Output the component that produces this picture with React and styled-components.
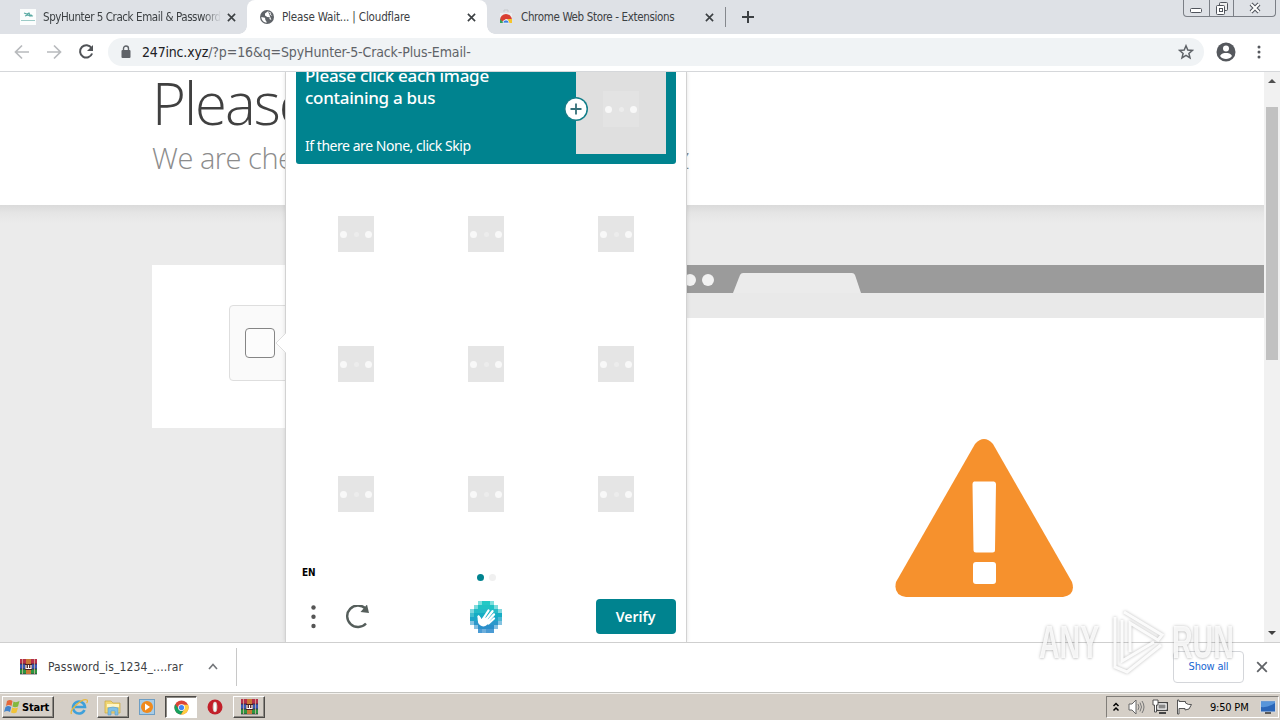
import React from 'react';
import styled, { createGlobalStyle } from 'styled-components';

const ui = `"DejaVu Sans Condensed", "DejaVu Sans", "Noto Sans", sans-serif`;
const light = `"Open Sans", "Noto Sans", sans-serif`;

const GlobalStyle = createGlobalStyle`
  * { box-sizing: border-box; }
  body { margin: 0; font-family: ${ui}; font-stretch: condensed; overflow: hidden; }
  h1, h2, p { margin: 0; font-weight: 400; }
  button { font-family: inherit; font-stretch: inherit; padding: 0; margin: 0; border: 0; background: none; }
  svg { display: block; flex: none; }
`;

const Screen = styled.div`
  position: relative;
  width: 1280px;
  height: 720px;
  display: flex;
  flex-direction: column;
  overflow: hidden;
  background: #fff;
`;

/* ---------- tab strip ---------- */
const TabStrip = styled.header`
  height: 34px;
  flex: none;
  display: flex;
  background: #dee1e6;
  padding-left: 7px;
`;
const Tab = styled.div`
  position: relative;
  width: ${p => p.$w}px;
  height: 34px;
  display: flex;
  align-items: center;
  padding: 0 11px 0 ${p => p.$pad}px;
  background: ${p => (p.$active ? '#fff' : 'transparent')};
  border-radius: 8px 8px 0 0;
  &::before, &::after {
    content: '';
    display: ${p => (p.$active ? 'block' : 'none')};
    position: absolute;
    bottom: 0;
    width: 8px;
    height: 8px;
  }
  &::before { left: -8px; background: radial-gradient(circle at 0 0, transparent 7.5px, #fff 8px); }
  &::after { right: -8px; background: radial-gradient(circle at 100% 0, transparent 7.5px, #fff 8px); }
`;
const TabTitle = styled.span`
  flex: 1;
  min-width: 0;
  margin: 0 ${p => (p.$fade ? 6 : 8)}px 0 ${p => p.$gap || 7}px;
  overflow: hidden;
  white-space: nowrap;
  font-size: 11.5px;
  line-height: 18px;
  letter-spacing: ${p => p.$ls || 0}px;
  color: #3c4043;
  mask-image: ${p => (p.$fade ? 'linear-gradient(90deg, #000 90%, transparent)' : 'none')};
`;
const TabDivider = styled.i`
  width: 1px;
  height: 20px;
  margin: 7px 16px 0 0;
  background: #85888d;
`;
const NewTab = styled.button`
  height: 34px;
  display: flex;
  align-items: center;
`;
const WindowButtons = styled.div`
  display: flex;
  width: 93px;
  height: 17px;
  margin: 0 4px 0 auto;
  border: 1px solid #7b7f86;
  border-top: 0;
  border-radius: 0 0 4px 4px;
`;
const WindowButton = styled.button`
  width: ${p => p.$w}px;
  display: flex;
  align-items: center;
  justify-content: center;
  & + & { border-left: 1px solid #7b7f86; }
`;

/* ---------- toolbar ---------- */
const Toolbar = styled.nav`
  height: 38px;
  flex: none;
  display: flex;
  align-items: center;
  padding: 0 12px 1px 13px;
  border-bottom: 1px solid #d5d7da;
`;
const NavButtons = styled.div`
  display: flex;
  gap: 14px;
  width: 95px;
`;
const Omnibox = styled.div`
  width: 1096px;
  height: 28px;
  display: flex;
  align-items: center;
  padding: 0 10px 0 12px;
  border-radius: 14px;
  background: #f0f3f5;
`;
const Url = styled.span`
  flex: 1;
  margin-left: 10px;
  font-size: 14px;
  letter-spacing: -0.12px;
  white-space: nowrap;
  color: #5f6368;
  b { font-weight: 400; color: #202124; letter-spacing: -0.18px; }
`;
const ToolbarEnd = styled.div`
  display: flex;
  align-items: center;
  gap: 21px;
  margin-left: 12px;
`;

/* ---------- web page ---------- */
const Viewport = styled.main`
  position: relative;
  height: 570px;
  flex: none;
  display: flex;
  overflow: hidden;
`;
const Page = styled.div`
  width: 1264px;
  background: #ebebeb;
`;
const PageHeader = styled.div`
  height: 133px;
  padding-left: 152px;
  background: #fff;
  font-family: ${light};
  font-stretch: normal;
  font-weight: 300;
  overflow: hidden;
  white-space: nowrap;
`;
const Heading = styled.h1`
  height: 68px;
  font-size: 58px;
  line-height: 62px;
  font-weight: 300;
  letter-spacing: -2px;
  color: #404040;
`;
const SubHeading = styled.h2`
  font-size: 29px;
  line-height: 36px;
  font-weight: 300;
  letter-spacing: ${p => p.$ls}px;
  color: #8c8c8c;
`;
const PageBody = styled.div`
  height: 437px;
  display: flex;
  padding: 60px 0 0 152px;
  background: linear-gradient(#dadada, #e5e5e5 8px, #ebebeb 18px);
`;
const CheckPanel = styled.section`
  width: 460px;
  height: 163px;
  margin-right: 30px;
  padding: 40px 0 0 77px;
  background: #fff;
`;
const CheckWidget = styled.div`
  width: 303px;
  height: 76px;
  display: flex;
  align-items: center;
  padding-left: 15px;
  border: 1px solid #dedede;
  border-radius: 4px;
  background: #fafafa;
`;
const CheckBox = styled.i`
  width: 30px;
  height: 30px;
  border: 1px solid #858585;
  border-radius: 4px;
  background: #fcfcfc;
`;
const Illustration = styled.section`
  flex: 1;
  display: flex;
  flex-direction: column;
  background: #fff;
`;
const IllustrationTabs = styled.div`
  height: 28px;
  display: flex;
  align-items: center;
  gap: 6px;
  padding: 2px 0 0 24px;
  background: #9b9b9b;
`;
const RoundDot = styled.i`
  width: 12px;
  height: 12px;
  border-radius: 50%;
  background: #f2f2f2;
`;
const TabShape = styled.svg`
  margin: 5px 0 0 13px;
`;
const IllustrationBar = styled.div`
  height: 25px;
  background: #e9e9e9;
`;
const Warning = styled.svg`
  margin: 120px 0 0 252px;
`;
const ScrollBar = styled.aside`
  width: 16px;
  display: flex;
  flex-direction: column;
  align-items: center;
  padding: 7px 0;
  background: #f1f1f1;
`;
const ScrollThumb = styled.i`
  width: 12px;
  height: 253px;
  margin: 24px 0 auto;
  background: #c1c1c1;
`;

/* ---------- captcha popup ---------- */
const Popup = styled.section`
  position: absolute;
  left: 285px;
  top: 0;
  width: 402px;
  height: 570px;
  padding: 0 10px;
  background: #fff;
  border: solid #d2d2d2;
  border-width: 0 1px;
  box-shadow: 0 0 4px rgba(0, 0, 0, 0.12);
`;
const PopupArrow = styled.svg`
  position: absolute;
  left: -11px;
  top: 260px;
`;
const Prompt = styled.div`
  height: 92px;
  display: flex;
  justify-content: space-between;
  padding: 0 10px 10px 9px;
  border-radius: 0 0 3px 3px;
  background: #00838f;
  color: #fff;
`;
const PromptText = styled.div`
  display: flex;
  flex-direction: column;
  justify-content: space-between;
  white-space: nowrap;
`;
const PromptTitle = styled.p`
  margin-top: -7px;
  font-family: "Noto Sans", sans-serif;
  font-size: 17px;
  font-weight: 500;
  line-height: 22px;
  letter-spacing: ${p => p.$ls}px;
`;
const PromptHint = styled.p`
  font-family: "Noto Sans", sans-serif;
  margin-bottom: -2px;
  font-size: 14px;
  line-height: 20px;
  letter-spacing: ${p => p.$ls}px;
`;
const Example = styled.div`
  position: relative;
  width: 90px;
  height: 82px;
  display: flex;
  justify-content: center;
  padding-top: 19px;
  background: #dfdfdf;
`;
const PlusBadge = styled.svg`
  position: absolute;
  left: -12px;
  top: 25px;
`;
const Grid = styled.div`
  display: grid;
  grid-template-columns: repeat(3, 120px);
  grid-auto-rows: 120px;
  gap: 10px;
  height: 390px;
  padding-top: 10px;
`;
const Cell = styled.div`
  display: flex;
  align-items: center;
  justify-content: center;
`;
const Placeholder = styled.div`
  width: 36px;
  height: 36px;
  display: flex;
  align-items: center;
  justify-content: space-between;
  padding: 0 2px;
  background: ${p => (p.$faint ? '#e3e3e3' : '#e5e5e5')};
`;
const Spot = styled.i`
  width: ${p => (p.$dim ? 5 : 7)}px;
  height: ${p => (p.$dim ? 5 : 7)}px;
  border-radius: 50%;
  background: ${p => (p.$dim ? '#ececec' : '#f8f8f8')};
`;
const Status = styled.div`
  height: 35px;
  display: flex;
  padding: 1px 0 0 6px;
`;
const Lang = styled.span`
  width: 175px;
  margin-top: 11px;
  font-size: 10px;
  line-height: 14px;
  font-weight: 700;
  letter-spacing: -0.2px;
  color: #000;
`;
const PageDot = styled.i`
  width: 7px;
  height: 7px;
  margin: 19px 5px 0 0;
  border-radius: 50%;
  background: ${p => (p.$on ? '#00838f' : '#f0f0f0')};
`;
const Actions = styled.div`
  height: 35px;
  margin-top: 10px;
  display: flex;
  align-items: center;
  justify-content: space-between;
`;
const ActionIcons = styled.div`
  display: flex;
  align-items: center;
  gap: 28px;
  width: 100px;
  padding-left: 12px;
`;
const ActionSubmit = styled.div`
  width: 100px;
  display: flex;
  justify-content: flex-end;
`;
const Verify = styled.button`
  width: 80px;
  height: 35px;
  padding-right: 1px;
  border-radius: 4px;
  background: #00838f;
  color: #fff;
  font-family: "Noto Sans", sans-serif;
  font-size: 14px;
  font-weight: 600;
`;

/* ---------- downloads shelf ---------- */
const Shelf = styled.footer`
  height: 50px;
  flex: none;
  display: flex;
  align-items: center;
  padding: 0 12px 2px 20px;
  border-top: 1px solid #cfcfcf;
  background: #fff;
`;
const FileName = styled.span`
  width: 160px;
  margin-left: 11px;
  font-size: 12px;
  letter-spacing: ${p => p.$ls}px;
  color: #3c4043;
  white-space: nowrap;
`;
const ShelfDivider = styled.i`
  width: 1px;
  height: 38px;
  margin-left: 18px;
  background: #c8c8c8;
`;
const ShowAll = styled.button`
  width: 71px;
  height: 32px;
  margin: 0 12px 0 auto;
  border: 1px solid #d4d6da;
  border-radius: 4px;
  font-size: 11px;
  letter-spacing: -0.2px;
  color: #1a67d2;
`;

/* ---------- taskbar ---------- */
const Taskbar = styled.footer`
  height: 28px;
  flex: none;
  display: flex;
  align-items: center;
  padding: 1px 1px 0 2px;
  border-top: 1px solid #c4c4c0;
  box-shadow: inset 0 1px #f4f2ee;
  background: #d5cfc7;
`;
const bevel = `
  border: 1px solid;
  border-color: #fff #4c4a47 #4c4a47 #fff;
  box-shadow: inset -1px -1px #8d8a84;
`;
const StartButton = styled.button`
  ${bevel}
  width: 52px;
  height: 22px;
  display: flex;
  align-items: center;
  gap: 1px;
  padding-left: 1px;
  font-size: 11px;
  font-weight: 700;
  letter-spacing: -0.2px;
`;
const TaskItem = styled.div`
  width: ${p => p.$w || 32}px;
  height: 22px;
  margin-left: ${p => p.$ml || 0}px;
  display: flex;
  align-items: center;
  justify-content: center;
  ${p => (p.$raised ? bevel : '')}
  ${p => (p.$pressed ? 'background:#fff;border:1px solid;border-color:#4c4a47 #fff #fff #4c4a47;box-shadow:inset 1px 1px #8d8a84;' : '')}
`;
const Tray = styled.div`
  width: 173px;
  height: 22px;
  margin-left: auto;
  display: flex;
  align-items: center;
  padding: 0 2px 0 5px;
  border: 1px solid;
  border-color: #817e79 #fff #fff #817e79;
`;
const TrayIcons = styled.div`
  display: flex;
  align-items: center;
  gap: 7px;
  width: 97px;
`;
const Clock = styled.time`
  width: 51px;
  padding-left: 1px;
  font-size: 11px;
  letter-spacing: ${p => p.$ls}px;
  white-space: nowrap;
`;

/* ---------- watermark ---------- */
const Watermark = styled.div`
  position: absolute;
  left: 1039px;
  top: 606px;
  display: flex;
  align-items: center;
  height: 70px;
  pointer-events: none;
`;
const MarkWord = styled.span`
  width: ${p => p.$w}px;
  margin-top: 2px;
  font-family: "Liberation Sans", sans-serif;
  font-stretch: normal;
  font-size: 46px;
  line-height: 46px;
  font-weight: 700;
  transform: scaleX(0.62);
  transform-origin: 0 50%;
  color: rgba(255, 255, 255, 0.85);
  text-shadow: 0 0 4px rgba(0, 0, 0, 0.24), 0 1px 3px rgba(0, 0, 0, 0.1);
`;
const MarkLogo = styled.svg`
  margin: 0 6px 0 3px;
  filter: drop-shadow(0 0 1.5px rgba(0, 0, 0, 0.3));
`;

const Close = ({ size = 9, color = '#3c4043', w = 1.8 }) => (
  <svg width={size} height={size} viewBox="0 0 10 10"><path d="M1 1L9 9M9 1L1 9" stroke={color} strokeWidth={w} /></svg>
);

const Books = () => (
  <svg width="17" height="16" viewBox="0 0 17 16">
    <rect x="0" y="0" width="17" height="5" fill="#b5304b" />
    <rect x="0" y="5" width="17" height="5" fill="#3a58b4" />
    <rect x="0" y="10" width="17" height="5" fill="#2d9540" />
    <path d="M0 5H17M0 10H17M0 15H17" stroke="#2a2038" strokeWidth=".7" />
    <path d="M2.5 0V15M14.5 0V15" stroke="#e0b8a0" opacity=".75" />
    <rect x="6" y="0" width="5" height="15" fill="#c97936" />
    <rect x="5" y="5" width="7" height="6" fill="#4b2020" />
    <path d="M6 6V9.5H11V6M8.5 6V9" stroke="#fff" fill="none" strokeWidth="1.2" />
  </svg>
);

const Loading = ({ faint }) => (
  <Placeholder $faint={faint}><Spot /><Spot $dim /><Spot /></Placeholder>
);

const handPixels = [
  [8, 0, 16, '#23c9c5'], [4, 4, 24, '#20c2c4'], [0, 8, 32, '#25bbc7'], [0, 12, 32, '#16adc4'],
  [0, 16, 32, '#1fa5c8'], [0, 20, 32, '#2c98cb'], [4, 24, 24, '#2b8fca'], [8, 28, 16, '#4a9bd4'],
];

const HandLogo = () => (
  <svg width="32" height="32" viewBox="0 0 32 32">
    {handPixels.map(([x, y, w, c]) => <rect key={y} x={x} y={y} width={w} height="4" fill={c} />)}
    <path d="M4 4h4v4H4zM24 4h4v4h-4zM4 24h4v4H4zM24 24h4v4h-4zM0 8h4v4H0zM28 8h4v4h-4zM0 20h4v4H0zM28 20h4v4h-4zM8 0h4v4H8zM20 0h4v4h-4z" fill="#fff" opacity=".42" />
    <path d="M0 12h4v4H0zM28 16h4v4h-4zM12 28h4v4h-4z" fill="#fff" opacity=".2" />
    <path d="M10.5 21L8.5 15.5M13 18L18.5 9.5M15.5 19L22.5 10.2M17.5 20.5L24 13.4M18.5 22.5L24 17.5" stroke="#fff" strokeWidth="2.3" strokeLinecap="round" />
    <path d="M8 14.5Q10 14.5 11.5 18L14 15.5L20 20L17.5 23.5Q13.5 27 9.8 24Q7.5 22 7.6 18Z" fill="#fff" />
  </svg>
);

export default function App() {
  return (
    <Screen>
      <GlobalStyle />
      <TabStrip>
        <Tab $w={240} $pad={13}>
          <svg width="16" height="16" viewBox="0 0 16 16"><rect width="16" height="16" fill="#fbfdfd" /><path d="M4 4l3 1 2-1 1 2 3 1M5 7l3-1 2 1 2-1" stroke="#5aaaa3" strokeWidth="1.2" fill="none" /><path d="M1 11.5H15" stroke="#9ccbc7" /></svg>
          <TabTitle $fade $ls={-0.43}>SpyHunter 5 Crack Email &amp; Password</TabTitle>
          <Close />
        </Tab>
        <Tab $w={240} $pad={13} $active>
          <svg width="14" height="14" viewBox="0 0 14 14"><circle cx="7" cy="7" r="7" fill="#5f6368" /><path d="M8 1.3L5 3.5v2L7.2 7 9.8 7.3l-.4 1.6 2 1.1M1.3 7L5 7.8 5.4 10 7 12.5 5.3 12.4C3 11.7 1.4 9.8 1.3 7ZM8 1.3L11.5 3l-2 1.5 3 1.8" fill="#fff" /></svg>
          <TabTitle $ls={-0.16} $gap={8}>Please Wait... | Cloudflare</TabTitle>
          <Close />
        </Tab>
        <Tab $w={238} $pad={12}>
          <svg width="14" height="16" viewBox="0 0 14 16"><path d="M5 3V1H9V3" stroke="#c7c9cc" fill="none" /><path d="M1 4H13V14H1Z" fill="#eceef0" /><path d="M1 14V11A6 6 0 0 1 13 11L7 10Z" fill="#d93f32" /><path d="M1 14V10L5 14Z" fill="#36a35a" /><path d="M8 14L9 10H13V14Z" fill="#f6c52b" /><path d="M4 14A3 3 0 0 1 10 14Z" fill="#3d7fe0" stroke="#fff" strokeWidth=".6" /></svg>
          <TabTitle $ls={-0.35} $gap={8}>Chrome Web Store - Extensions</TabTitle>
          <Close />
        </Tab>
        <TabDivider />
        <NewTab aria-label="New tab"><svg width="12" height="12" viewBox="0 0 12 12"><path d="M6 0V12M0 6H12" stroke="#3c4043" strokeWidth="2" /></svg></NewTab>
        <WindowButtons>
          <WindowButton $w={25}><svg width="13" height="16"><rect x=".5" y="8.5" width="11" height="4" rx="1" fill="#fff" stroke="#50545c" /></svg></WindowButton>
          <WindowButton $w={25}><svg width="14" height="14" viewBox="0 0 14 14"><rect x="4.5" y="1.5" width="8" height="8" rx="1" fill="#eee" stroke="#50545c" /><rect x="1.5" y="4.5" width="8" height="9" rx="1" fill="#fff" stroke="#50545c" /><rect x="4.5" y="7.5" width="3" height="3" fill="#fff" stroke="#50545c" /></svg></WindowButton>
          <WindowButton $w={42}><svg width="12" height="12" viewBox="0 0 12 12"><path d="M2 2L10 10M10 2L2 10" stroke="#50545c" strokeWidth="4" /><path d="M2 2L10 10M10 2L2 10" stroke="#fff" strokeWidth="2" /></svg></WindowButton>
        </WindowButtons>
      </TabStrip>

      <Toolbar>
        <NavButtons>
          <svg width="18" height="18" viewBox="0 0 18 18"><path d="M16 9H3M9 2.5L2.5 9L9 15.5" stroke="#b8babd" strokeWidth="1.7" fill="none" /></svg>
          <svg width="18" height="18" viewBox="0 0 18 18"><path d="M2 9H15M9 2.5L15.5 9L9 15.5" stroke="#b8babd" strokeWidth="1.7" fill="none" /></svg>
          <svg width="18" height="18" viewBox="0 0 18 18"><path d="M14.5 5A6.2 6.2 0 1 0 15.1 10.5" stroke="#505357" strokeWidth="2" fill="none" /><path d="M16 2V8H10Z" fill="#505357" /></svg>
        </NavButtons>
        <Omnibox>
          <svg width="12" height="14" viewBox="0 0 12 14"><rect x="1.5" y="5" width="9" height="8" rx="1" fill="#5f6368" /><path d="M3.5 5V3.5a2.5 2.5 0 0 1 5 0V5" stroke="#5f6368" strokeWidth="1.4" fill="none" /></svg>
          <Url><b>247inc.xyz</b>/?p=16&amp;q=SpyHunter-5-Crack-Plus-Email-</Url>
          <svg width="16" height="16" viewBox="0 0 16 16"><path d="M8 1.8L9.8 6.1L14.4 6.4L10.9 9.4L12 13.9L8 11.4L4 13.9L5.1 9.4L1.6 6.4L6.2 6.1Z" stroke="#5f6368" strokeWidth="1.5" fill="none" /></svg>
        </Omnibox>
        <ToolbarEnd>
          <svg width="20" height="20" viewBox="0 0 20 20"><circle cx="10" cy="10" r="9.5" fill="#55585d" /><circle cx="10" cy="6.5" r="3" fill="#fff" /><path d="M4 14C5 11.5 8 11 10 11S15 11.5 16 14A7.5 7.5 0 0 1 4 14Z" fill="#fff" /></svg>
          <svg width="4" height="16" viewBox="0 0 4 16"><circle cx="2" cy="3" r="1.5" fill="#55585d" /><circle cx="2" cy="8" r="1.5" fill="#55585d" /><circle cx="2" cy="13" r="1.5" fill="#55585d" /></svg>
        </ToolbarEnd>
      </Toolbar>

      <Viewport>
        <Page>
          <PageHeader>
            <Heading>Please Wait...</Heading>
            <SubHeading $ls={-0.48}>We are checking your browser... 247inc.xyz</SubHeading>
          </PageHeader>
          <PageBody>
            <CheckPanel><CheckWidget><CheckBox /></CheckWidget></CheckPanel>
            <Illustration>
              <IllustrationTabs>
                <RoundDot /><RoundDot /><RoundDot />
                <TabShape width="128" height="20" viewBox="0 0 128 20"><path d="M0 20L7 2Q8 0 10 0H119Q121 0 122 2L128 20Z" fill="#ebebeb" /></TabShape>
              </IllustrationTabs>
              <IllustrationBar />
              <Warning width="180" height="160" viewBox="0 0 180 160">
                <path d="M81 6Q90 -4 99 6L178 144Q182 157 169 159H12Q-1 157 2 144Z" fill="#f6912d" />
                <path d="M80 43.5H100Q102 44 102 46L101 112Q101 114.5 98.5 114.5H82Q79.5 114.5 79.5 112L78.5 46Q78.5 44 80 43.5Z" fill="#fff" />
                <rect x="79" y="124" width="23" height="22" rx="3" fill="#fff" />
              </Warning>
            </Illustration>
          </PageBody>
        </Page>
        <ScrollBar>
          <svg width="8" height="4" viewBox="0 0 8 4"><path d="M0 4L4 0L8 4Z" fill="#505050" /></svg>
          <ScrollThumb />
          <svg width="8" height="4" viewBox="0 0 8 4"><path d="M0 0L4 4L8 0Z" fill="#404040" /></svg>
        </ScrollBar>

        <Popup>
          <PopupArrow width="12" height="22" viewBox="0 0 12 22"><path d="M12 0L1 11L12 22Z" fill="#fff" /><path d="M11 1L1 11L11 21" stroke="#dedede" fill="none" /></PopupArrow>
          <Prompt>
            <PromptText>
              <PromptTitle $ls={-0.28}>Please click each image<br />containing a bus</PromptTitle>
              <PromptHint $ls={-0.46}>If there are None, click Skip</PromptHint>
            </PromptText>
            <Example>
              <Loading faint />
              <PlusBadge width="24" height="24" viewBox="0 0 24 24"><circle cx="12" cy="12" r="12" fill="#127e89" /><circle cx="12" cy="12" r="10.5" fill="#fff" /><path d="M12 6.5V17.5M6.5 12H17.5" stroke="#357079" strokeWidth="1.8" /></PlusBadge>
            </Example>
          </Prompt>
          <Grid>
            {Array.from({ length: 9 }, (_, i) => <Cell key={i}><Loading /></Cell>)}
          </Grid>
          <Status><Lang>EN</Lang><PageDot $on /><PageDot /></Status>
          <Actions>
            <ActionIcons>
              <svg width="10" height="24" viewBox="0 0 10 24"><circle cx="5.5" cy="2.5" r="2.2" fill="#555" /><circle cx="5.5" cy="11.7" r="2.2" fill="#555" /><circle cx="5.5" cy="21" r="2.2" fill="#555" /></svg>
              <svg width="24" height="24" viewBox="0 0 24 24"><path d="M19.5 3.5A10.8 10.8 0 1 0 20 18.5" stroke="#555e5b" strokeWidth="2.4" fill="none" /><path d="M21 -0.5L23 8L14.5 7Z" fill="#555e5b" /></svg>
            </ActionIcons>
            <HandLogo />
            <ActionSubmit><Verify>Verify</Verify></ActionSubmit>
          </Actions>
        </Popup>
      </Viewport>

      <Shelf>
        <Books />
        <FileName $ls={0.14}>Password_is_1234_....rar</FileName>
        <svg width="10" height="7" viewBox="0 0 10 7"><path d="M1 6L5 1.5L9 6" stroke="#73767a" strokeWidth="1.6" fill="none" /></svg>
        <ShelfDivider />
        <ShowAll>Show all</ShowAll>
        <Close size={12} color="#606367" w={1.5} />
      </Shelf>

      <Taskbar>
        <StartButton>
          <svg width="17" height="16" viewBox="0 0 17 16"><path d="M3 2Q6 0 8.5 2L7.5 7Q5 5 2 7Z" fill="#e5683a" /><path d="M9.5 2.5Q12 4 15.5 2L14 7.5Q11 9 8.5 7.5Z" fill="#83b83e" /><path d="M1.5 8Q4 6 7.2 8L6 13Q3 11 0 13Z" fill="#4384cb" /><path d="M8.2 8.5Q11 10 14 8.5L12.5 13.5Q10 15 7 13.5Z" fill="#f1c338" /></svg>
          Start
        </StartButton>
        <TaskItem $w={32} $ml={9}>
          <svg width="18" height="18" viewBox="0 0 18 18"><path d="M14.5 12A6 6 0 1 1 15 9H5" stroke="#3ea0da" strokeWidth="2.6" fill="none" /><path d="M1.5 16C-1 12 12 0 17 2C18 3 17 4.5 16.5 5" stroke="#e7b83d" strokeWidth="1.3" fill="none" /></svg>
        </TaskItem>
        <TaskItem $raised $w={32} $ml={2}>
          <svg width="18" height="17" viewBox="0 0 18 17"><path d="M1 2H7L9 4H16V14H1Z" fill="#f0d674" stroke="#c9a643" strokeWidth=".7" /><path d="M3 5H15V8H3Z" fill="#fff6c5" /><path d="M4 16V9Q9 7 14 9V16H11V12H7V16Z" fill="#7fc0e6" stroke="#5b9cc9" strokeWidth=".6" /></svg>
        </TaskItem>
        <TaskItem $w={34} $ml={1}>
          <svg width="16" height="16" viewBox="0 0 16 16"><rect x=".5" y=".5" width="15" height="15" fill="#a8cce6" stroke="#6d9ec4" /><circle cx="8" cy="8" r="6" fill="#f08a1d" /><path d="M6 4.5L11 8L6 11.5Z" fill="#fff" /></svg>
        </TaskItem>
        <TaskItem $pressed $w={32} $ml={1}>
          <svg width="15" height="15" viewBox="0 0 16 16"><circle cx="8" cy="8" r="7.5" fill="#db4437" /><path d="M1.3 4.5A7.5 7.5 0 0 0 7.5 15.5L11 9.5L5 9.5Z" fill="#16a05d" /><path d="M15 5H8L11 9.8L7.5 15.5A7.5 7.5 0 0 0 15 5Z" fill="#ffcd40" /><circle cx="8" cy="8" r="3.6" fill="#fff" /><circle cx="8" cy="8" r="2.8" fill="#4285f4" /></svg>
        </TaskItem>
        <TaskItem $w={34} $ml={1}>
          <svg width="16" height="16" viewBox="0 0 16 16"><ellipse cx="8" cy="8" rx="7.5" ry="7.5" fill="#c2202a" /><ellipse cx="8" cy="8" rx="2.3" ry="5.2" fill="#d5cfc7" /><ellipse cx="8" cy="8" rx="1" ry="4.6" fill="#fff" /></svg>
        </TaskItem>
        <TaskItem $raised $w={32} $ml={1}><Books /></TaskItem>
        <Tray>
          <TrayIcons>
            <svg width="8" height="10" viewBox="0 0 8 10"><path d="M1.5 4L4 1.5L6.5 4M1.5 8.5L4 6L6.5 8.5" stroke="#000" strokeWidth="1.5" fill="none" /></svg>
            <svg width="18" height="16" viewBox="0 0 18 16"><path d="M2 5H5L9 1V15L5 11H2Z" fill="#fff" stroke="#666" /><path d="M11 5Q13 8 11 11M13 3.5Q16 8 13 12.5M15 2Q19 8 15 14" stroke="#777" fill="none" /></svg>
            <svg width="17" height="16" viewBox="0 0 17 16"><rect x="4.5" y="3.5" width="11" height="8" fill="#aaa" stroke="#444" /><path d="M6 5H14V10H6Z" fill="#888" stroke="#fff" /><path d="M7 14H14" stroke="#444" strokeWidth="2" /><path d="M1 1H6V6H4.5V13H2.5V6H1Z" fill="#fff" stroke="#444" strokeWidth=".9" /></svg>
            <svg width="17" height="16" viewBox="0 0 17 16"><path d="M1.5 1V15H3V9.5H9V11L13 10L15.5 5.5Q12 6 9.5 4V2.5H3V1Z" fill="#fff" stroke="#555" /></svg>
          </TrayIcons>
          <Clock $ls={-0.2}>9:50 PM</Clock>
          <svg width="16" height="14" viewBox="0 0 16 14"><rect x=".5" y="1" width="15" height="11" fill="#2a66b8" stroke="#d2d8e0" /><path d="M1 7Q8 8 15 3V1.5H1Z" fill="#5795da" /><path d="M5 13H11" stroke="#333" strokeWidth="1.5" /></svg>
        </Tray>
      </Taskbar>

      <Watermark>
        <MarkWord $w={66}>ANY</MarkWord>
        <MarkLogo width="58" height="66" viewBox="0 0 58 66"><path d="M16 4L54 27L50 32L22 15V44M7 9V59L19 64L53 37M14 12V53L46 34" fill="none" stroke="#fff" strokeWidth="3" opacity=".9" /></MarkLogo>
        <MarkWord $w={66}>RUN</MarkWord>
      </Watermark>
    </Screen>
  );
}
